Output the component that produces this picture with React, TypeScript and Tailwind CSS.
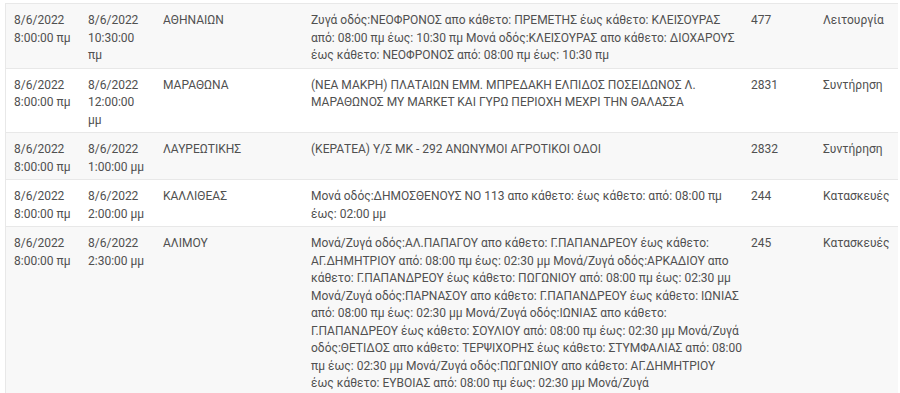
import React from "react";

type Row = {
  start: string[];
  end: string[];
  area: string;
  desc: string[];
  num: string;
  kind: string;
  bg: string;
};

const rows: Row[] = [
  {
    start: ["8/6/2022", "8:00:00 πμ"],
    end: ["8/6/2022", "10:30:00", "πμ"],
    area: "ΑΘΗΝΑΙΩΝ",
    desc: [
      "Ζυγά οδός:ΝΕΟΦΡΟΝΟΣ απο κάθετο: ΠΡΕΜΕΤΗΣ έως κάθετο: ΚΛΕΙΣΟΥΡΑΣ",
      "από: 08:00 πμ έως: 10:30 πμ Μονά οδός:ΚΛΕΙΣΟΥΡΑΣ απο κάθετο: ΔΙΟΧΑΡΟΥΣ",
      "έως κάθετο: ΝΕΟΦΡΟΝΟΣ από: 08:00 πμ έως: 10:30 πμ",
    ],
    num: "477",
    kind: "Λειτουργία",
    bg: "bg-[#f8f8f8]",
  },
  {
    start: ["8/6/2022", "8:00:00 πμ"],
    end: ["8/6/2022", "12:00:00", "μμ"],
    area: "ΜΑΡΑΘΩΝΑ",
    desc: [
      "(ΝΕΑ ΜΑΚΡΗ) ΠΛΑΤΑΙΩΝ ΕΜΜ. ΜΠΡΕΔΑΚΗ ΕΛΠΙΔΟΣ ΠΟΣΕΙΔΩΝΟΣ Λ.",
      "ΜΑΡΑΘΩΝΟΣ ΜΥ MARKET ΚΑΙ ΓΥΡΩ ΠΕΡΙΟΧΗ ΜΕΧΡΙ ΤΗΝ ΘΑΛΑΣΣΑ",
    ],
    num: "2831",
    kind: "Συντήρηση",
    bg: "bg-white",
  },
  {
    start: ["8/6/2022", "8:00:00 πμ"],
    end: ["8/6/2022", "1:00:00 μμ"],
    area: "ΛΑΥΡΕΩΤΙΚΗΣ",
    desc: ["(ΚΕΡΑΤΕΑ) Υ/Σ ΜΚ - 292 ΑΝΩΝΥΜΟΙ ΑΓΡΟΤΙΚΟΙ ΟΔΟΙ"],
    num: "2832",
    kind: "Συντήρηση",
    bg: "bg-[#f8f8f8]",
  },
  {
    start: ["8/6/2022", "8:00:00 πμ"],
    end: ["8/6/2022", "2:00:00 μμ"],
    area: "ΚΑΛΛΙΘΕΑΣ",
    desc: [
      "Μονά οδός:ΔΗΜΟΣΘΕΝΟΥΣ ΝΟ 113 απο κάθετο: έως κάθετο: από: 08:00 πμ",
      "έως: 02:00 μμ",
    ],
    num: "244",
    kind: "Κατασκευές",
    bg: "bg-white",
  },
  {
    start: ["8/6/2022", "8:00:00 πμ"],
    end: ["8/6/2022", "2:30:00 μμ"],
    area: "ΑΛΙΜΟΥ",
    desc: [
      "Μονά/Ζυγά οδός:ΑΛ.ΠΑΠΑΓΟΥ απο κάθετο: Γ.ΠΑΠΑΝΔΡΕΟΥ έως κάθετο:",
      "ΑΓ.ΔΗΜΗΤΡΙΟΥ από: 08:00 πμ έως: 02:30 μμ Μονά/Ζυγά οδός:ΑΡΚΑΔΙΟΥ απο",
      "κάθετο: Γ.ΠΑΠΑΝΔΡΕΟΥ έως κάθετο: ΠΩΓΩΝΙΟΥ από: 08:00 πμ έως: 02:30 μμ",
      "Μονά/Ζυγά οδός:ΠΑΡΝΑΣΟΥ απο κάθετο: Γ.ΠΑΠΑΝΔΡΕΟΥ έως κάθετο: ΙΩΝΙΑΣ",
      "από: 08:00 πμ έως: 02:30 μμ Μονά/Ζυγά οδός:ΙΩΝΙΑΣ απο κάθετο:",
      "Γ.ΠΑΠΑΝΔΡΕΟΥ έως κάθετο: ΣΟΥΛΙΟΥ από: 08:00 πμ έως: 02:30 μμ Μονά/Ζυγά",
      "οδός:ΘΕΤΙΔΟΣ απο κάθετο: ΤΕΡΨΙΧΟΡΗΣ έως κάθετο: ΣΤΥΜΦΑΛΙΑΣ από: 08:00",
      "πμ έως: 02:30 μμ Μονά/Ζυγά οδός:ΠΩΓΩΝΙΟΥ απο κάθετο: ΑΓ.ΔΗΜΗΤΡΙΟΥ",
      "έως κάθετο: ΕΥΒΟΙΑΣ από: 08:00 πμ έως: 02:30 μμ Μονά/Ζυγά",
    ],
    num: "245",
    kind: "Κατασκευές",
    bg: "bg-[#f8f8f8]",
  },
];

function Lines({ lines }: { lines: string[] }) {
  return (
    <>
      {lines.map((l, i) => (
        <div key={i} className="whitespace-nowrap">
          {l}
        </div>
      ))}
    </>
  );
}

export default function App() {
  return (
    <div
      className="w-[900px] h-[393px] overflow-hidden bg-white pl-[5px] pt-[3px]"
      style={{ fontFamily: "Roboto, 'Liberation Sans', sans-serif" }}
    >
      <div className="w-[893px] border-t border-l border-[#e8e8e8] text-[12px] leading-[17.5px] text-[#505050]">
        {rows.map((r, i) => (
          <div
            key={i}
            className={`grid grid-cols-[74px_75px_148px_440px_72px_84px] border-b border-[#e8e8e8] ${r.bg}`}
          >
            <div className="pl-[8px] pt-[8px] pb-[3px]">
              <Lines lines={r.start} />
            </div>
            <div className="pl-[8px] pt-[8px] pb-[3px]">
              <Lines lines={r.end} />
            </div>
            <div className="pl-[8px] pt-[8px] pb-[3px]">{r.area}</div>
            <div className="pl-[8px] pt-[8px] pb-[3px]">
              <Lines lines={r.desc} />
            </div>
            <div className="pl-[8px] pt-[8px] pb-[3px]">{r.num}</div>
            <div className="pl-[8px] pt-[8px] pb-[3px] whitespace-nowrap">{r.kind}</div>
          </div>
        ))}
      </div>
    </div>
  );
}
